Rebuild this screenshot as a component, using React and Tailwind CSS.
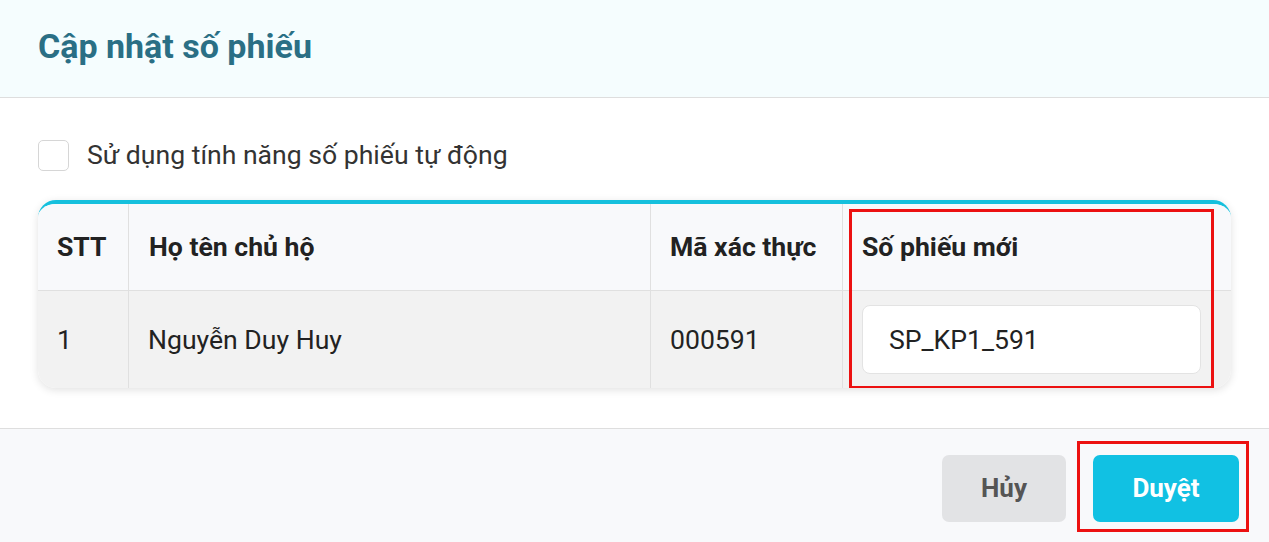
export default function App() {
  return (
    <div className="w-[1269px] h-[542px] bg-white flex flex-col font-['Roboto',sans-serif] overflow-hidden">
      <div className="h-[98px] shrink-0 bg-[#f5fdfe] border-b border-[#dedede] flex items-center px-[38px]">
        <h1 className="text-[34px] font-bold text-[#2a6f85] leading-none -mt-[6px]">Cập nhật số phiếu</h1>
      </div>

      <div className="flex-1 px-[38px] pt-[42px]">
        <label className="flex items-center gap-[18px]">
          <span className="w-[31px] h-[31px] rounded-[5px] border border-[#d6d6d6] bg-white" />
          <span className="text-[26.6px] text-[#333] leading-none">Sử dụng tính năng số phiếu tự động</span>
        </label>

        <div className="relative mt-[29px] rounded-[18px] border-t-[4px] border-[#16c0dd] shadow-[0_2px_8px_rgba(0,0,0,0.12)] overflow-hidden">
          <div className="grid grid-cols-[90px_522px_192px_1fr] bg-[#f8f9fb] h-[87px] border-b border-[#e0e0e0] text-[26.6px] font-bold text-[#222]">
            <div className="flex items-center pl-[19px]">STT</div>
            <div className="flex items-center pl-[20px] border-l border-[#e0e0e0]">Họ tên chủ hộ</div>
            <div className="flex items-center pl-[19px] border-l border-[#e0e0e0]">Mã xác thực</div>
            <div className="flex items-center pl-[19px] border-l border-[#e0e0e0]">Số phiếu mới</div>
          </div>
          <div className="grid grid-cols-[90px_522px_192px_1fr] bg-[#f2f2f2] h-[97px] text-[26.6px] text-[#222]">
            <div className="flex items-center pl-[19px]">1</div>
            <div className="flex items-center pl-[19px] border-l border-[#e0e0e0]">Nguyễn Duy Huy</div>
            <div className="flex items-center pl-[19px] border-l border-[#e0e0e0]">000591</div>
            <div className="flex items-center pl-[19px] pr-[30px] border-l border-[#e0e0e0]">
              <div className="w-full h-[69px] bg-white border border-[#e3e3e3] rounded-[8px] flex items-center pl-[26px]">SP_KP1_591</div>
            </div>
          </div>
          <div className="absolute left-[811px] top-[5px] w-[365px] h-[180px] border-[3px] border-[#ec1111] pointer-events-none" />
        </div>
      </div>

      <div className="h-[114px] shrink-0 bg-[#f8f9fb] border-t border-[#dedede] flex items-start justify-end pt-[26px] pr-[30px] gap-[27px]">
        <button className="w-[124px] h-[67px] rounded-[7px] bg-[#e2e3e5] text-[26px] font-bold text-[#555]">Hủy</button>
        <div className="relative">
          <button className="w-[146px] h-[67px] rounded-[7px] bg-[#11c1e3] text-[26px] font-bold text-white">Duyệt</button>
          <div className="absolute left-[-16px] top-[-14px] w-[172px] h-[91px] border-[3px] border-[#ec1111] pointer-events-none" />
        </div>
      </div>
    </div>
  );
}
